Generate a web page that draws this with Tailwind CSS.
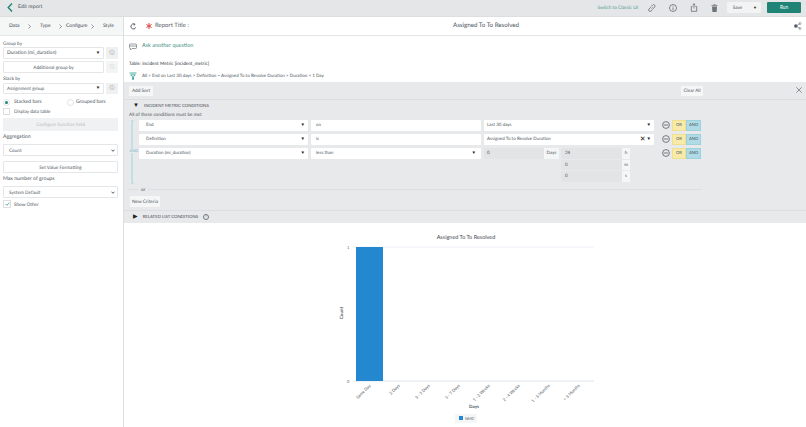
<!DOCTYPE html>
<html lang="en">
<head>
    <meta charset="UTF-8">
    <title>Edit report</title>
    <script src="https://cdn.jsdelivr.net/npm/@tailwindcss/browser@4"></script>
</head>
<body class="w-[806px] h-[427px] overflow-hidden bg-white text-[#4c5560] font-['Lato',sans-serif] text-[4.7px] leading-none [text-rendering:geometricPrecision]">
    <!-- top bar -->
    <div class="h-[17px] pb-[1px] bg-[#e4e6e7] flex items-center border-b border-[#dcdee0]">
        <svg class="ml-[7px] w-[6px] h-[9px]" viewBox="0 0 6 9"><path d="M5 .5 1.200 4.500 5 8.500" fill="none" stroke="#1f8476" stroke-width="1.400"/></svg>
        <span class="ml-[5px] text-[5.200px] text-[#4c5560]">Edit report</span>
        <span class="ml-auto text-[4.700px] text-[#4e9d91]">Switch to Classic UI</span>
        <svg class="ml-[10px] w-[8px] h-[8px]" viewBox="0 0 8 8" fill="none" stroke="#555f68" stroke-width=".7"><path d="M3.400 4.600 4.600 3.400M3 2.600 4.600 1a1.300 1.300 0 0 1 2 2L5.200 4.800M2.800 3.200 1 5a1.300 1.300 0 0 0 2 2L4.800 5.400"/></svg>
        <svg class="ml-[13px] w-[8px] h-[8px]" viewBox="0 0 8 8" fill="none" stroke="#555f68" stroke-width=".7"><circle cx="4" cy="4" r="3.500"/><path d="M4 3.400V6.200M4 1.800V2.600"/></svg>
        <svg class="ml-[13px] w-[8px] h-[9px]" viewBox="0 0 8 9" fill="none" stroke="#555f68" stroke-width=".7"><path d="M2.500 3.500H1.300V8.300H6.700V3.500H5.500M4 5.500V.8M2.700 2 4 .8 5.300 2"/></svg>
        <svg class="ml-[13px] w-[7px] h-[8px]" viewBox="0 0 7 8" fill="#6d757c"><path d="M.5 1.200H6.500V2H.5ZM2.500.3H4.500V1H2.500ZM1 2.500H6L5.600 8H1.400Z"/></svg>
        <div class="ml-[9px] h-[11px] flex bg-[#f2f3f3] rounded-[1px]">
            <span class="w-[21px] flex items-center justify-center">Save</span>
            <span class="w-[12px] ml-px flex items-center justify-center text-[#222] text-[4px]">▼</span>
        </div>
        <button class="ml-[6px] mr-[5px] w-[34px] h-[11px] bg-[#1f8476] text-white text-[4.700px] rounded-[1px]">Run</button>
    </div>

    <div class="flex h-[410px]">
        <!-- left sidebar -->
        <aside class="w-[124px] shrink-0 border-r border-[#dcdee0]">
            <div class="h-[19px] bg-[#f5f6f6] border-b border-[#e4e6e7] flex items-center text-[#3f4852] text-[5px]">
                <span class="ml-[9px] w-[10px]">Data</span>
                <svg class="ml-[9px] w-[3px] h-[5px]" viewBox="0 0 3 5"><path d="M.5.500 2.500 2.500.5 4.500" fill="none" stroke="#555" stroke-width=".6"/></svg>
                <span class="ml-[9px] w-[11px]">Type</span>
                <svg class="ml-[8px] w-[3px] h-[5px]" viewBox="0 0 3 5"><path d="M.5.500 2.500 2.500.5 4.500" fill="none" stroke="#555" stroke-width=".6"/></svg>
                <span class="ml-[4px] w-[23px]">Configure</span>
                <svg class="ml-[2px] w-[3px] h-[5px]" viewBox="0 0 3 5"><path d="M.5.500 2.500 2.500.5 4.500" fill="none" stroke="#555" stroke-width=".6"/></svg>
                <span class="ml-[9px]">Style</span>
            </div>
            <div class="pl-[3px] pr-[5px] pt-[5px]">
                <div class="h-[5px] leading-[5px]">Group by</div>
                <div class="mt-[1px] flex gap-[2px]">
                    <div class="w-[102px] h-[12px] bg-white border border-[#e4e6e7] rounded-[1px] flex items-center justify-between px-[3px] text-[5px]">Duration (mi_duration)<span class="text-[#222] text-[4.500px]">▼</span></div>
                    <div class="w-[12px] h-[12px] bg-[#eff0f1] flex items-center justify-center text-[#777] text-[5px]">ⓘ</div>
                </div>
                <div class="mt-[2px] flex gap-[2px]">
                    <div class="w-[102px] h-[12px] border border-[#e4e6e7] rounded-[1px] flex items-center justify-center">Additional group by</div>
                    <div class="w-[12px] h-[12px] bg-[#f3f4f4] flex items-center justify-center text-[#c8c8c8] text-[5px]">ⓘ</div>
                </div>
                <div class="mt-[3px] h-[5px] leading-[5px]">Stack by</div>
                <div class="mt-[2px] flex gap-[2px]">
                    <div class="w-[102px] h-[11px] bg-white border border-[#e4e6e7] rounded-[1px] flex items-center justify-between px-[3px]">Assignment group<span class="text-[#222] text-[4.500px]">▼</span></div>
                    <div class="w-[12px] h-[11px] bg-[#eff0f1] flex items-center justify-center text-[#777] text-[5px]">ⓘ</div>
                </div>
                <div class="mt-[4px] h-[8px] flex items-center">
                    <span class="w-[7px] h-[7px] rounded-full border border-[#e0e2e3] flex items-center justify-center"><span class="w-[3px] h-[3px] rounded-full bg-[#1f8476]"></span></span>
                    <span class="ml-[4px] w-[30px] text-[5px]">Stacked bars</span>
                    <span class="ml-[23px] w-[7px] h-[7px] rounded-full border border-[#e0e2e3]"></span>
                    <span class="ml-[2px] text-[5px]">Grouped bars</span>
                </div>
                <div class="mt-[2px] h-[7px] flex items-center">
                    <span class="w-[7px] h-[7px] border border-[#dcdee0]"></span>
                    <span class="ml-[4px]">Display data table</span>
                </div>
                <div class="mt-[3px] w-[115px] h-[13px] bg-[#f0f1f2] flex items-center justify-center text-[#b8bcc0]">Configure function field</div>
                <div class="mt-[4px] text-[5.200px] h-[6px]">Aggregation</div>
                <div class="mt-[3px] w-[115px] h-[12px] border border-[#e4e6e7] rounded-[1px] flex items-center justify-between pl-[5px] pr-[2px]">Count<svg class="w-[4px] h-[3px]" viewBox="0 0 4 3"><path d="M.5.700 2 2.300 3.500.700" fill="none" stroke="#333" stroke-width=".8"/></svg></div>
                <div class="mt-[5px] w-[115px] h-[12px] border border-[#e4e6e7] rounded-[1px] flex items-center justify-center">Set Value Formatting</div>
                <div class="mt-[4px] text-[5.200px] h-[6px]">Max number of groups</div>
                <div class="mt-[3px] w-[115px] h-[12px] border border-[#e4e6e7] rounded-[1px] flex items-center justify-between pl-[5px] pr-[2px]">System Default<svg class="w-[4px] h-[3px]" viewBox="0 0 4 3"><path d="M.5.700 2 2.300 3.500.700" fill="none" stroke="#333" stroke-width=".8"/></svg></div>
                <div class="mt-[2px] h-[8px] flex items-center">
                    <span class="w-[8px] h-[8px] border border-[#dcdee0] flex items-center justify-center"><svg class="w-[5px] h-[4px]" viewBox="0 0 5 4"><path d="M.5 2 1.800 3.300 4.500.7" fill="none" stroke="#1f8476" stroke-width=".7"/></svg></span>
                    <span class="ml-[3px]">Show Other</span>
                </div>
            </div>
        </aside>

        <main class="flex-1 min-w-0">
            <!-- title row -->
            <div class="h-[19px] border-b border-[#e4e6e7] flex items-center relative">
                <svg class="ml-[6px] w-[7px] h-[7px]" viewBox="0 0 7 7" fill="none" stroke="#444c54" stroke-width=".9"><path d="M5.700 4.400A2.500 2.500 0 1 1 4.600 1.300M3.800.2 5 1.400 3.800 2.500"/></svg>
                <svg class="ml-[9px] w-[6px] h-[6px]" viewBox="0 0 6 6" stroke="#d8433f" stroke-width="1"><path d="M3 0V6M.4 1.500 5.600 4.500M.4 4.500 5.600 1.500"/></svg>
                <span class="ml-[3px] text-[6px] text-[#5b636b]">Report Title :</span>
                <span class="absolute left-[329px] w-[66px] whitespace-nowrap text-center text-[6.200px] text-[#4c5560]">Assigned To To Resolved</span>
                <svg class="ml-auto mr-[4px] w-[8px] h-[8px]" viewBox="0 0 8 8" fill="#555f68" stroke="#555f68" stroke-width=".5"><path d="M2 4 6 1.500M2 4 6 6.500" fill="none"/><circle cx="1.800" cy="4" r="1.500"/><circle cx="6" cy="1.500" r="1" fill="none"/><circle cx="6" cy="6.500" r="1" fill="none"/></svg>
            </div>
            <!-- question + table info -->
            <div class="h-[46px] pl-[5px] text-[4.700px]">
                <div class="pt-[3px] h-[18px] flex items-center">
                    <svg class="w-[8px] h-[8px]" viewBox="0 0 8 8" fill="none" stroke="#555f68" stroke-width=".6"><path d="M1.300 1H6.700Q7.500 1 7.500 1.800V4.700Q7.500 5.500 6.700 5.500H3L1.500 7V5.500H1.300Q.5 5.500.5 4.700V1.800Q.5 1 1.300 1ZM.5 3H7.500"/></svg>
                    <span class="ml-[5px] text-[5.500px] text-[#3e8f83]">Ask another question</span>
                </div>
                <div class="mt-[7px] text-[#2f363d] h-[5px]">Table: Incident Metric [incident_metric]</div>
                <div class="mt-[6px] flex items-center h-[8px]">
                    <svg class="w-[8px] h-[8px]" viewBox="0 0 8 8" fill="none" stroke="#2b9a8a" stroke-width=".8"><path d="M.5 1H7.500M1.700 2.800H6.300L4.500 4.800V7.500H3.500V4.800Z"/></svg>
                    <span class="ml-[5px] text-[4.500px]">All &gt; End on Last 30 days &gt; Definition = Assigned To to Resolve Duration &gt; Duration &lt; 1 Day</span>
                </div>
            </div>
            <!-- conditions panel -->
            <div class="h-[141px] bg-[#e8e9ea] relative">
                <div class="h-[18px] border-b border-[#dcdee0] flex items-center justify-between pl-[5px]">
                    <span class="h-[10px] w-[24px] bg-[#f5f6f6] flex items-center justify-center">Add Sort</span>
                    <span class="h-[10px] w-[22px] mr-[103px] bg-[#f5f6f6] flex items-center justify-center">Clear All</span>
                </div>
                <svg class="absolute right-[4px] top-[5px] w-[6px] h-[6px]" viewBox="0 0 6 6" stroke="#4c5560" stroke-width=".6"><path d="M.3.300 5.700 5.700M5.700.300.3 5.700"/></svg>
                <div class="h-[10px] pt-[2px] flex items-center pl-[9px]">
                    <span class="text-[#222] text-[6px]">▼</span>
                    <span class="ml-[5px] text-[4.300px] text-[#3f4852]">INCIDENT METRIC CONDITIONS</span>
                </div>
                <div class="pl-[5px] mt-[2px] h-[5px] text-[4.700px]">All of these conditions must be met</div>

                <div class="flex pl-[5px] mt-[3px]">
                    <!-- AND bracket -->
                    <div class="w-[10px] h-[64px] relative shrink-0">
                        <span class="absolute left-[2px] top-0 bottom-0 w-[3px] border-l-2 border-t border-b border-[#c2dfe7]"></span>
                        <span class="absolute left-0 top-[29px] bg-[#e8e9ea] text-[#6fb4c8] text-[4px] px-[.5px]">AND</span>
                    </div>
                    <div class="flex flex-col gap-[3px] text-[4.500px]">
                        <div class="flex items-start">
                            <div class="w-[169px] h-[11px] bg-white rounded-[1px] flex items-center justify-between pl-[7px] pr-[3px]">End<span class="text-[#222] text-[4.500px]">▼</span></div>
                            <div class="ml-[3px] w-[170px] h-[11px] bg-white rounded-[1px] flex items-center px-[5px]">on</div>
                            <div class="ml-[3px] w-[170px] h-[11px] bg-white rounded-[1px] flex items-center justify-between px-[3px]">Last 30 days<span class="text-[#222] text-[4.500px]">▼</span></div>
                            <svg class="ml-[8px] mt-[1px] w-[8px] h-[8px]" viewBox="0 0 8 8" fill="none" stroke="#444c54" stroke-width=".7"><circle cx="4" cy="4" r="3.400"/><path d="M1.800 4H6.200"/></svg>
                            <span class="ml-[2px] w-[14px] h-[11px] bg-[#f8ebaa] border border-[#efdf8e] text-[4.200px] flex items-center justify-center">OR</span>
                            <span class="w-[15px] h-[11px] bg-[#aedbe6] border border-[#9fd0dd] text-[4.200px] flex items-center justify-center">AND</span>
                        </div>
                        <div class="flex items-start">
                            <div class="w-[169px] h-[11px] bg-white rounded-[1px] flex items-center justify-between pl-[7px] pr-[3px]">Definition<span class="text-[#222] text-[4.500px]">▼</span></div>
                            <div class="ml-[3px] w-[170px] h-[11px] bg-white rounded-[1px] flex items-center px-[5px]">is</div>
                            <div class="ml-[3px] w-[170px] h-[11px] bg-white rounded-[1px] flex items-center px-[3px]">Assigned To to Resolve Duration<span class="ml-auto text-[#222] text-[7px]">✕</span><span class="ml-[1px] text-[#222] text-[4.500px]">▼</span></div>
                            <svg class="ml-[8px] mt-[1px] w-[8px] h-[8px]" viewBox="0 0 8 8" fill="none" stroke="#444c54" stroke-width=".7"><circle cx="4" cy="4" r="3.400"/><path d="M1.800 4H6.200"/></svg>
                            <span class="ml-[2px] w-[14px] h-[11px] bg-[#f8ebaa] border border-[#efdf8e] text-[4.200px] flex items-center justify-center">OR</span>
                            <span class="w-[15px] h-[11px] bg-[#aedbe6] border border-[#9fd0dd] text-[4.200px] flex items-center justify-center">AND</span>
                        </div>
                        <div class="flex items-start">
                            <div class="w-[169px] h-[11px] bg-white rounded-[1px] flex items-center justify-between pl-[7px] pr-[3px]">Duration (mi_duration)<span class="text-[#222] text-[4.500px]">▼</span></div>
                            <div class="ml-[3px] w-[170px] h-[11px] bg-white rounded-[1px] flex items-center justify-between px-[5px]">less than<span class="text-[#222] text-[4.500px]">▼</span></div>
                            <div class="ml-[3px] w-[170px] flex items-start">
                                <div class="w-[60px] h-[11px] bg-[#e3e4e5] flex items-center px-[3px]">0</div>
                                <div class="w-[15px] h-[11px] bg-[#f5f6f6] flex items-center justify-center">Days</div>
                                <div class="ml-[2px] flex flex-col gap-[1px]">
                                    <div class="flex"><span class="w-[61px] h-[11px] bg-[#e3e4e5] flex items-center px-[4px]">24</span><span class="w-[8px] h-[11px] bg-[#f5f6f6] flex items-center justify-center">h</span></div>
                                    <div class="flex"><span class="w-[61px] h-[10px] bg-[#e3e4e5] flex items-center px-[4px]">0</span><span class="w-[8px] h-[10px] bg-[#f5f6f6] flex items-center justify-center">m</span></div>
                                    <div class="flex"><span class="w-[61px] h-[11px] bg-[#e3e4e5] flex items-center px-[4px]">0</span><span class="w-[8px] h-[11px] bg-[#f5f6f6] flex items-center justify-center">s</span></div>
                                </div>
                            </div>
                            <svg class="ml-[8px] mt-[1px] w-[8px] h-[8px]" viewBox="0 0 8 8" fill="none" stroke="#444c54" stroke-width=".7"><circle cx="4" cy="4" r="3.400"/><path d="M1.800 4H6.200"/></svg>
                            <span class="ml-[2px] w-[14px] h-[11px] bg-[#f8ebaa] border border-[#efdf8e] text-[4.200px] flex items-center justify-center">OR</span>
                            <span class="w-[15px] h-[11px] bg-[#aedbe6] border border-[#9fd0dd] text-[4.200px] flex items-center justify-center">AND</span>
                        </div>
                    </div>
                </div>
                <div class="ml-[5px] w-[573px] flex items-center h-[5px] mt-[3px]">
                    <span class="w-[9px] h-px bg-[#dcdee0]"></span>
                    <span class="mx-[3px]">or</span>
                    <span class="flex-1 h-px bg-[#dcdee0]"></span>
                </div>
                <div class="pl-[6px] mt-[4px] h-[15px] border-b border-[#dcdee0]">
                    <span class="h-[11px] w-[30px] bg-[#f5f6f6] flex items-center justify-center">New Criteria</span>
                </div>
                <div class="h-[12px] flex items-center pl-[9px]">
                    <span class="text-[#222] text-[6px]">▶</span>
                    <span class="ml-[5px] text-[4.300px] text-[#3f4852]">RELATED LIST CONDITIONS</span>
                    <span class="ml-[5px] w-[6px] h-[6px] rounded-full border border-[#777] text-[3.500px] flex items-center justify-center">?</span>
                </div>
            </div>
            <!-- chart -->
            <svg class="block w-[682px] h-[204px]" viewBox="124 223 682 204" font-family="Lato, sans-serif" font-size="4.500" fill="#4c5560">
                <text x="466" y="239" text-anchor="middle" font-size="5.500" fill="#3f4852">Assigned To To Resolved</text>
                <path d="M355 247H594" stroke="#e8ecf2" stroke-width=".8"/>
                <path d="M355 381H594" stroke="#d6deea" stroke-width=".8"/>
                <rect x="356" y="247" width="27" height="134" fill="#2388cf"/>
                <text x="347" y="249" font-size="4">1</text>
                <text x="347" y="383" font-size="4">0</text>
                <text transform="translate(343 313) rotate(-90)" text-anchor="middle" font-weight="700" font-size="4.500">Count</text>
                <text transform="translate(371 386) rotate(-45)" text-anchor="end" font-size="4.200">Same Day</text>
                <text transform="translate(400 386) rotate(-45)" text-anchor="end" font-size="4.200">2 Days</text>
                <text transform="translate(430 386) rotate(-45)" text-anchor="end" font-size="4.200">3 - 5 Days</text>
                <text transform="translate(460 386) rotate(-45)" text-anchor="end" font-size="4.200">5 - 7 Days</text>
                <text transform="translate(490 386) rotate(-45)" text-anchor="end" font-size="4.200">1 - 2 Weeks</text>
                <text transform="translate(520 386) rotate(-45)" text-anchor="end" font-size="4.200">2 - 4 Weeks</text>
                <text transform="translate(550 386) rotate(-45)" text-anchor="end" font-size="4.200">1 - 3 Months</text>
                <text transform="translate(580 386) rotate(-45)" text-anchor="end" font-size="4.200">&gt; 3 Months</text>
                <text x="474" y="408" text-anchor="middle" font-weight="700" font-size="4.500">Days</text>
                <rect x="455" y="414" width="22" height="9" fill="#f5f6f6"/>
                <rect x="459" y="416" width="4" height="4" fill="#2388cf"/>
                <text x="465" y="420" font-size="4">NMC</text>
            </svg>
        </main>
    </div>
</body>
</html>
